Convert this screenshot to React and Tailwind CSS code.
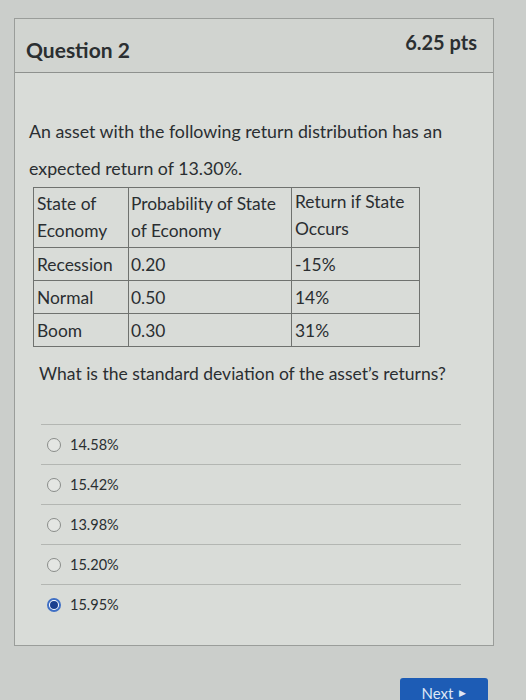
import React from 'react';

const ROWS = [
  { state: 'Recession', prob: '0.20', ret: '-15%' },
  { state: 'Normal', prob: '0.50', ret: '14%' },
  { state: 'Boom', prob: '0.30', ret: '31%' },
];

const ANSWERS = [
  { label: '14.58%', checked: false },
  { label: '15.42%', checked: false },
  { label: '13.98%', checked: false },
  { label: '15.20%', checked: false },
  { label: '15.95%', checked: true },
];

function Radio({ checked }) {
  if (checked) {
    return (
      <span className="w-[14px] h-[14px] rounded-full border-2 border-[#3f6fc4] bg-white flex items-center justify-center">
        <span className="w-[8px] h-[8px] rounded-full bg-[#1b3f8f]" />
      </span>
    );
  }
  return <span className="w-[14px] h-[14px] rounded-full border border-[#8a8d8a] bg-[#e4e6e3]" />;
}

export default function App() {
  return (
    <div className="w-[526px] h-[700px] overflow-hidden bg-[#cbcecb] pt-[18px] pl-[14px] text-[#2a2e31]"
      style={{ fontFamily: 'Lato, "Open Sans", sans-serif' }}>
      {/* Card */}
      <div className="w-[480px] border border-[#9a9d9a] bg-[#d9dcd8]">
        {/* Header */}
        <div className="h-[54px] bg-[#d1d4d0] border-b border-[#8e918e] flex items-center justify-between pl-[11px] pr-[16px]">
          <h2 className="text-[21px] font-bold mt-[8px] text-[#2b2f31]">Question 2</h2>
          <span className="text-[20px] font-bold mb-[8px] text-[#2b2f31]">6.25 pts</span>
        </div>

        {/* Body */}
        <div className="pt-[40px] pl-[14px] pr-[10px] pb-[20px]">
          <p className="text-[17.8px] leading-[37px]">
            An asset with the following return distribution has an<br />expected return of 13.30%.
          </p>

          <table className="ml-[4px] border-collapse text-[17.4px] leading-[27px]">
            <tbody>
              <tr className="h-[60px] align-top">
                <td className="w-[95px] border border-[#6f726f] px-[3px] pt-[2px]">State of<br />Economy</td>
                <td className="w-[163px] border border-[#6f726f] px-[2px] pt-[2px]">Probability of State<br />of Economy</td>
                <td className="w-[128px] border border-[#6f726f] px-[3px] pt-[0px]">Return if State<br />Occurs</td>
              </tr>
              {ROWS.map(r => (
                <tr key={r.state} className="h-[33px]">
                  <td className="border border-[#6f726f] px-[3px]">{r.state}</td>
                  <td className="border border-[#6f726f] px-[2px]">{r.prob}</td>
                  <td className="border border-[#6f726f] px-[3px]">{r.ret}</td>
                </tr>
              ))}
            </tbody>
          </table>

          <p className="text-[17.5px] leading-[24px] mt-[15px] ml-[10px]">
            What is the standard deviation of the asset’s returns?
          </p>

          {/* Answers */}
          <div className="mt-[38px] ml-[12px] mr-[22px] border-t border-[#b3b6b2]">
            {ANSWERS.map((a, i) => (
              <div key={a.label}
                className={`h-[40px] flex items-center gap-[9px] pl-[6px] ${i < ANSWERS.length - 1 ? 'border-b border-[#b3b6b2]' : ''}`}>
                <Radio checked={a.checked} />
                <span className="text-[14.5px]">{a.label}</span>
              </div>
            ))}
          </div>
        </div>
      </div>

      {/* Footer */}
      <div className="w-[480px] flex justify-end mt-[32px] pr-[6px]">
        <button className="w-[88px] h-[32px] rounded-[3px] bg-[#1d5cb5] text-[#dfe7f5] text-[15px] flex items-center justify-center gap-[6px] pb-[2px]">
          Next
          <span className="text-[9px]">▶</span>
        </button>
      </div>
    </div>
  );
}
